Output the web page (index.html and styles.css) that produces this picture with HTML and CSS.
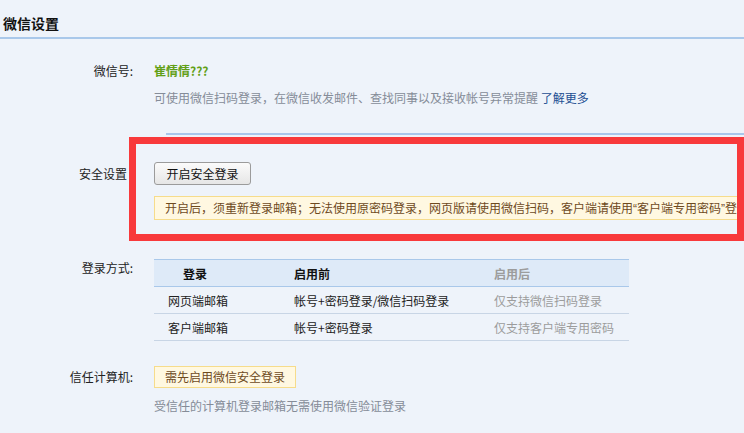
FILE: index.html
```html
<!DOCTYPE html>
<html lang="zh-CN">
<head>
  <meta charset="UTF-8">
  <meta name="viewport" content="width=device-width, initial-scale=1.0">
  <title>微信设置</title>
  <link rel="stylesheet" href="styles.css">
</head>
<body>
  <div class="page">
    <h1 class="title">微信设置</h1>

    <div class="row row-wechat">
      <div class="label">微信号:</div>
      <div class="content">
        <div class="nickname">崔情情???</div>
        <div class="desc">可使用微信扫码登录，在微信收发邮件、查找同事以及接收帐号异常提醒 <a href="#" class="more">了解更多</a></div>
      </div>
    </div>

    <div class="divider"></div>

    <div class="row row-secure">
      <div class="label label-btn">安全设置</div>
      <div class="content">
        <button class="btn">开启安全登录</button>
        <div class="notice">开启后，须重新登录邮箱；无法使用原密码登录，网页版请使用微信扫码，客户端请使用<span class="q">“</span>客户端专用密码<span class="q">”</span>登录邮箱</div>
      </div>
    </div>

    <div class="row row-login">
      <div class="label">登录方式:</div>
      <div class="content">
        <table class="login-table">
          <tr>
            <th class="col-type">登录</th>
            <th class="col-before">启用前</th>
            <th class="col-after">启用后</th>
          </tr>
          <tr>
            <td>网页端邮箱</td>
            <td>帐号+密码登录/微信扫码登录</td>
            <td class="muted">仅支持微信扫码登录</td>
          </tr>
          <tr>
            <td>客户端邮箱</td>
            <td>帐号+密码登录</td>
            <td class="muted">仅支持客户端专用密码</td>
          </tr>
        </table>
      </div>
    </div>

    <div class="row row-trust">
      <div class="label label-badge">信任计算机:</div>
      <div class="content">
        <span class="badge">需先启用微信安全登录</span>
        <div class="desc desc-trust">受信任的计算机登录邮箱无需使用微信验证登录</div>
      </div>
    </div>

    <!-- annotation frame -->
    <div class="highlight"></div>
  </div>
</body>
</html>
```

FILE: styles.css
```css
body {
  margin: 0;
  background: #eef3fa;
  font-family: "Noto Sans CJK SC", "Liberation Sans", sans-serif;
  font-size: 12px;
  color: #222;
  overflow: hidden;
}
.page {
  position: relative;
  width: 744px;
  height: 433px;
  overflow: hidden;
}
.title {
  margin: 0;
  height: 39px;
  box-sizing: border-box;
  padding: 10px 0 0 3px;
  line-height: 26px;
  font-size: 14px;
  font-weight: bold;
  color: #111;
  border-bottom: 2px solid #a9c8ea;
}
.row {
  display: grid;
  grid-template-columns: 133px 1fr;
  column-gap: 21px;
}
.label {
  text-align: right;
  line-height: 20px;
  color: #222;
  white-space: nowrap;
}
.content {
  min-width: 0;
}
.row-wechat {
  margin-top: 22px;
}
.nickname {
  line-height: 20px;
  font-weight: bold;
  color: #62a016;
}
.desc {
  margin-top: 7px;
  line-height: 20px;
  color: #858c98;
  white-space: nowrap;
}
.more {
  color: #1c4e92;
  text-decoration: none;
}
.divider {
  margin: 25px 0 0 166px;
  height: 2px;
  background: #a9c6eb;
}
.row-secure {
  margin-top: 27px;
}
.label-btn {
  line-height: 23px;
  padding-right: 6px;
}
.btn {
  display: block;
  width: 97px;
  height: 23px;
  padding: 0;
  font: inherit;
  color: #111;
  background: linear-gradient(#fbfbfb, #e6e6e6);
  border: 1px solid #9b9b9b;
  border-radius: 3px;
}
.notice {
  margin-top: 11px;
  height: 24px;
  box-sizing: border-box;
  padding: 0 10px;
  line-height: 22px;
  white-space: nowrap;
  overflow: hidden;
  color: #6e4a1e;
  background: #fff8e1;
  border: 1px solid #f6dc8b;
  width: 590px;
}
.q {
  font-family: "Liberation Sans", sans-serif;
}
.row-login {
  margin-top: 39px;
}
.row-login .label {
  line-height: 18px;
}
.login-table {
  border-collapse: collapse;
  width: 475px;
}
.login-table th,
.login-table td {
  height: 26px;
  padding: 0 0 0 14px;
  text-align: left;
  white-space: nowrap;
}
.login-table th {
  background: #deeaf8;
  border-top: 1px solid #a9c8ea;
  border-bottom: 1px solid #a9c8ea;
  font-weight: bold;
  color: #111;
}
.login-table td {
  border-bottom: 1px solid #c8d5e5;
  color: #222;
}
.login-table th.col-type {
  width: 97px;
  padding-left: 29px;
}
.login-table th.col-before {
  width: 186px;
}
.login-table th.col-after,
.login-table td.muted {
  color: #9c9c9c;
}
.row-trust {
  margin-top: 25px;
}
.label-badge {
  line-height: 22px;
}
.badge {
  display: inline-block;
  height: 22px;
  box-sizing: border-box;
  padding: 0 10px;
  line-height: 20px;
  color: #6e4a1e;
  background: #fff8e1;
  border: 1px solid #f6dc8b;
}
.desc-trust {
  margin-top: 8px;
}
.highlight {
  position: absolute;
  left: 129px;
  top: 137px;
  width: 615px;
  height: 104px;
  box-sizing: border-box;
  border: 7px solid #f8393b;
}
```
